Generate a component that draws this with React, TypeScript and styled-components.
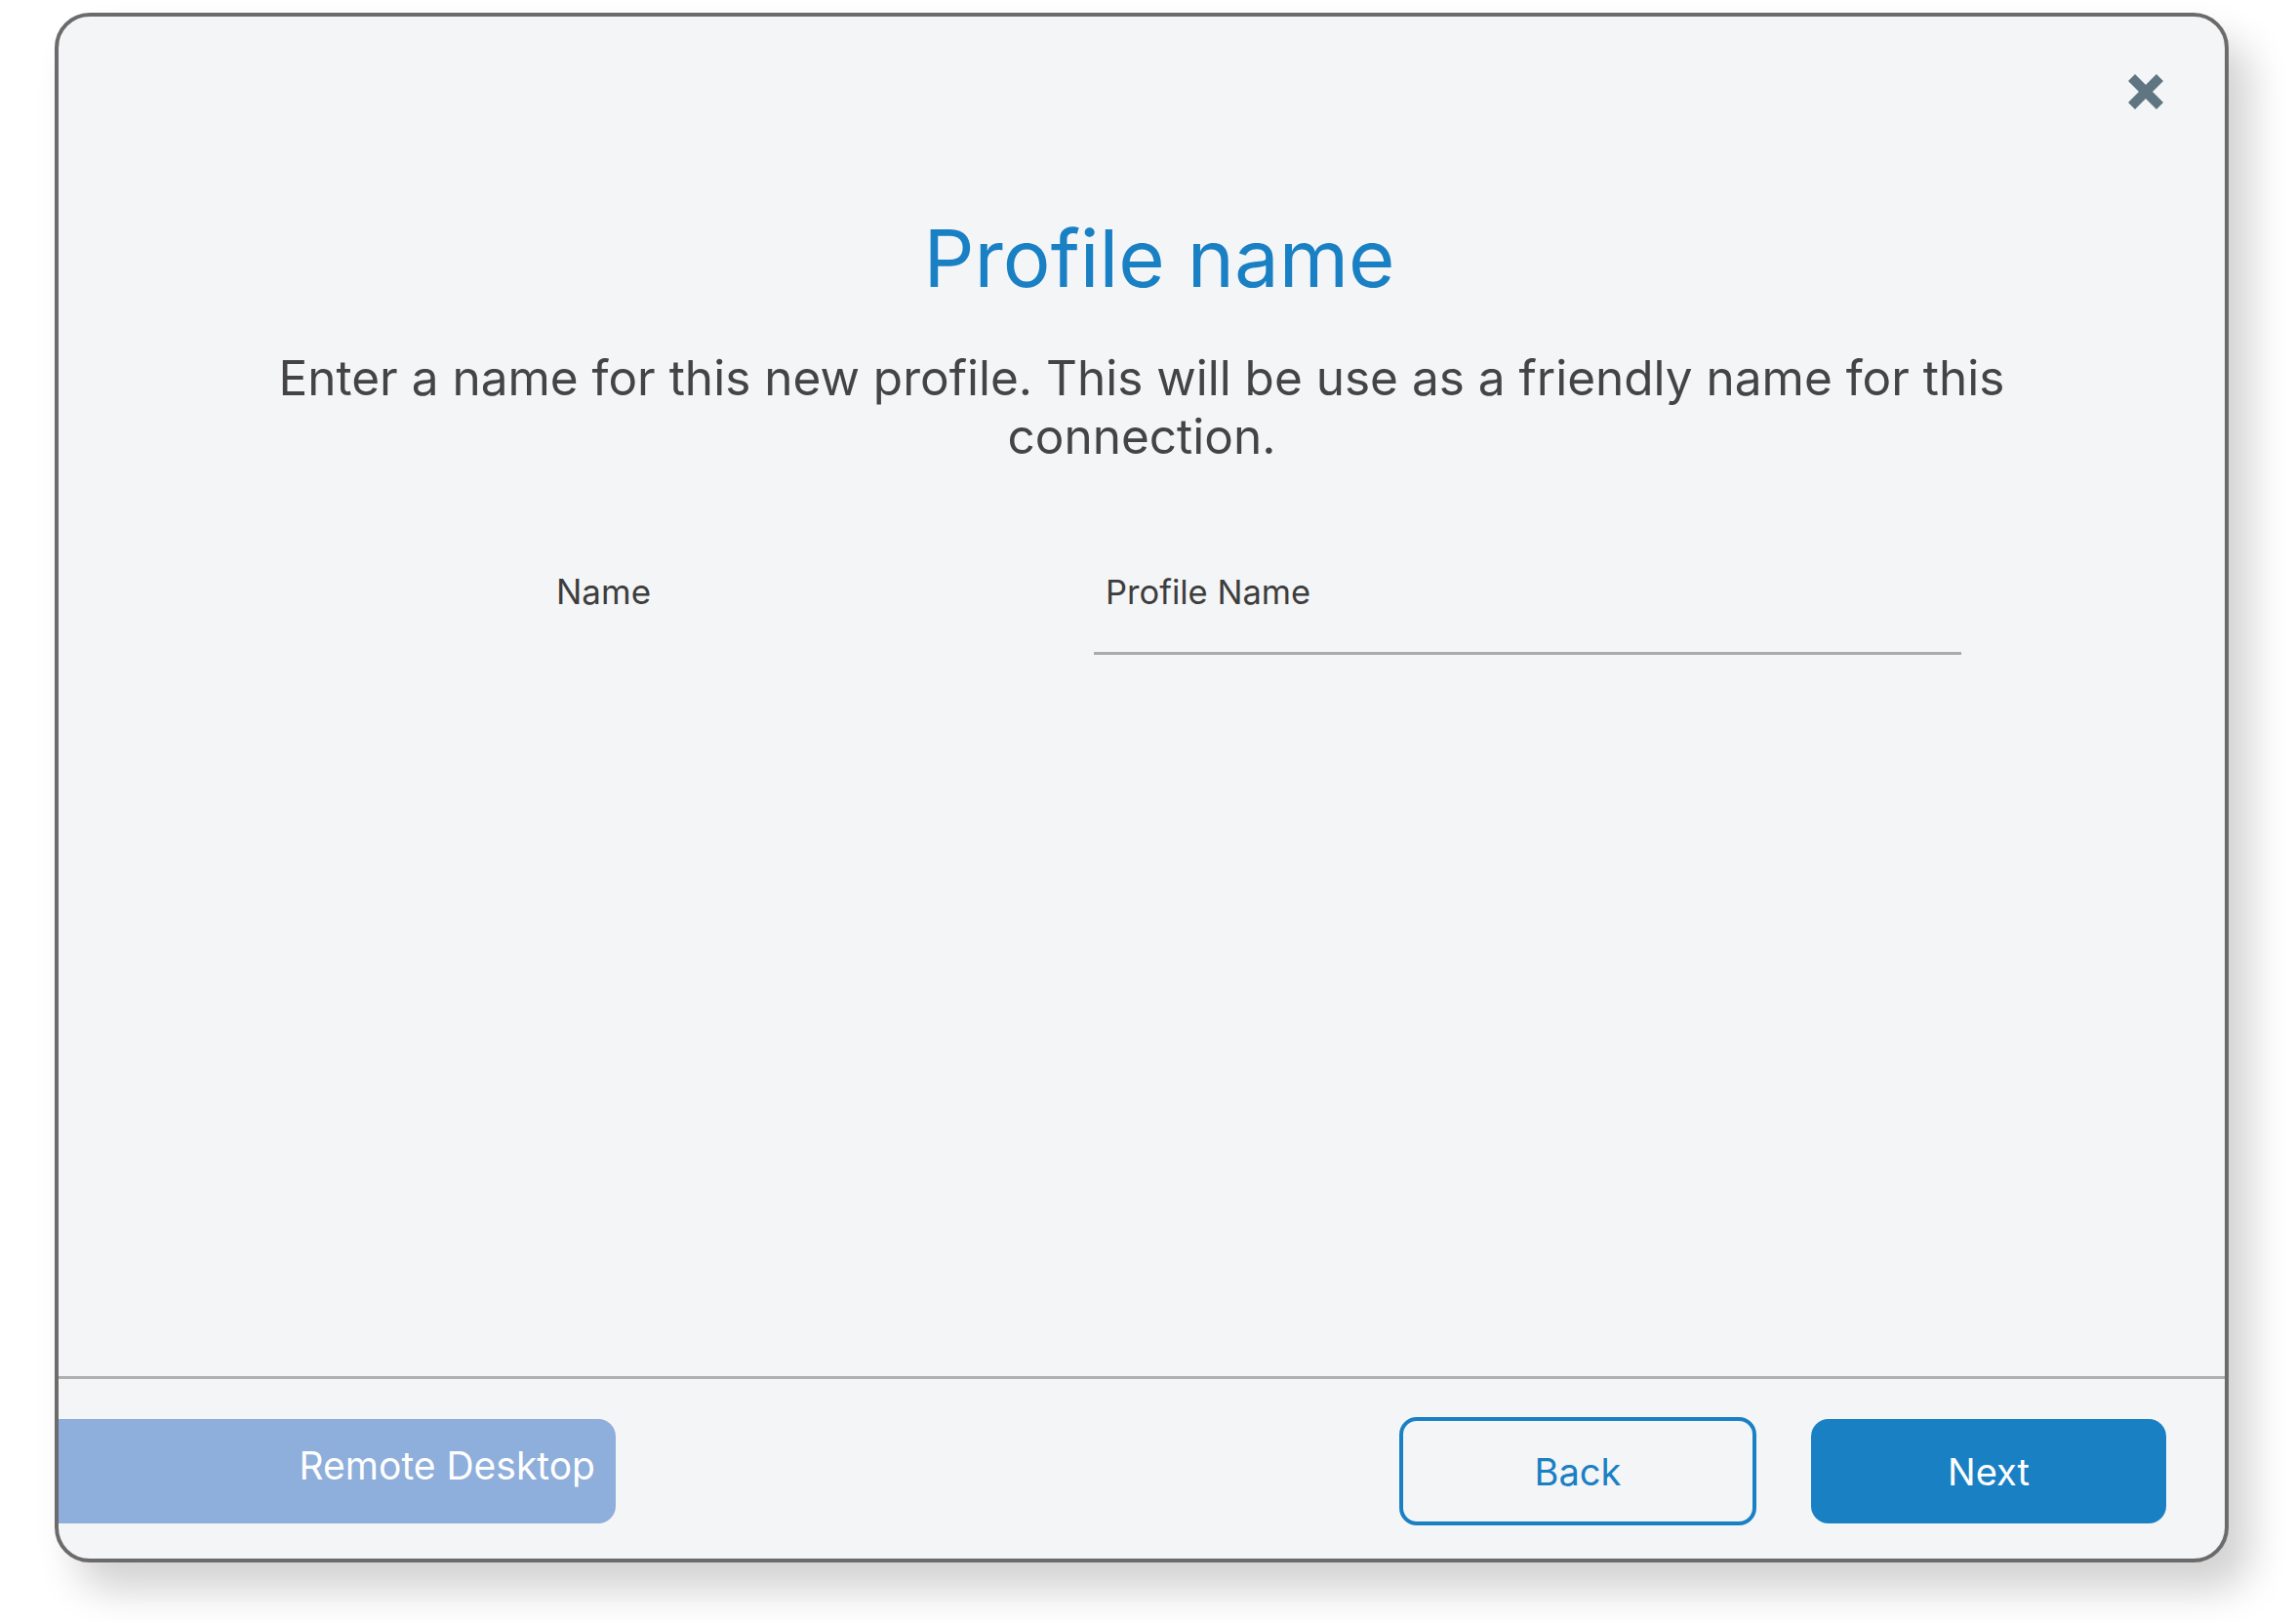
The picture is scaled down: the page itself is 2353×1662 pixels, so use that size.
import styled, { createGlobalStyle } from "styled-components";

const GlobalStyle = createGlobalStyle`
  html, body {
    margin: 0;
    padding: 0;
    background: #ffffff;
  }
  body {
    font-family: Inter, "Noto Sans", sans-serif;
  }
`;

// Page wrapper, places the dialog on the white page
const Page = styled.div`
  padding: 13px 0 0 56px;
  min-height: 1662px;
  box-sizing: border-box;
`;

// The dialog card
const Card = styled.div`
  position: relative;
  width: 2228px;
  height: 1588px;
  box-sizing: border-box;
  display: flex;
  flex-direction: column;
  background: #f4f5f7;
  border: 4px solid #6b6b6b;
  border-radius: 36px;
  box-shadow: 22px 28px 40px rgba(0, 0, 0, 0.18);
  overflow: hidden;
`;

const Main = styled.div`
  flex: 1;
  display: flex;
  flex-direction: column;
  align-items: center;
  padding-top: 197px;
`;

const CloseButton = styled.button`
  position: absolute;
  top: 59px;
  right: 63px;
  width: 36px;
  height: 36px;
  padding: 0;
  border: none;
  background: transparent;
  cursor: pointer;
  display: flex;
`;

const Title = styled.h1`
  margin: 0;
  padding-left: 36px;
  font-size: 81.5px;
  line-height: 102px;
  font-weight: 400;
  color: #1a80c4;
`;

const Description = styled.p`
  margin: 41px 0 0;
  max-width: 1850px;
  font-size: 49.5px;
  line-height: 60px;
  color: #444444;
  text-align: center;
`;

const FormRow = styled.div`
  align-self: flex-start;
  margin: 108px 0 0 510px;
  display: grid;
  grid-template-columns: 551px 889px;
  align-items: start;
`;

const Label = styled.label`
  font-size: 35px;
  line-height: 42px;
  color: #3d3d3d;
`;

const Input = styled.input`
  box-sizing: content-box;
  height: 42px;
  padding: 0 12px 41px;
  margin: 0;
  border: none;
  border-bottom: 3px solid #ababab;
  background: transparent;
  font-family: Inter, "Noto Sans", sans-serif;
  font-size: 34.5px;
  color: #3d3d3d;
  outline: none;

  &::placeholder {
    color: #3d3d3d;
    opacity: 1;
  }
`;

const Footer = styled.div`
  height: 179px;
  border-top: 3px solid #b0b0b0;
  display: flex;
  align-items: center;
  justify-content: space-between;
  padding: 5px 60px 0 0;
  box-sizing: content-box;
`;

const ProductTab = styled.div`
  width: 571px;
  height: 107px;
  box-sizing: border-box;
  display: flex;
  align-items: center;
  justify-content: flex-end;
  padding: 0 21px 12px 0;
  background: #8eaedb;
  border-radius: 0 18px 18px 0;
  font-size: 39px;
  color: #ffffff;
`;

const Actions = styled.div`
  display: flex;
  align-items: center;
  gap: 56px;
`;

const Button = styled.button<{ $primary?: boolean }>`
  box-sizing: border-box;
  width: ${(p) => (p.$primary ? "364px" : "366px")};
  height: ${(p) => (p.$primary ? "107px" : "111px")};
  border-radius: 18px;
  border: ${(p) => (p.$primary ? "none" : "4px solid #1a80c4")};
  background: ${(p) => (p.$primary ? "#1a80c4" : "transparent")};
  color: ${(p) => (p.$primary ? "#ffffff" : "#1a80c4")};
  font-family: Inter, "Noto Sans", sans-serif;
  font-size: 38px;
  cursor: pointer;
`;

const CloseIcon = () => (
  <svg width="36" height="36" viewBox="0 0 36 36">
    <path d="M3.5 3.5 L32.5 32.5 M32.5 3.5 L3.5 32.5" stroke="#5f7682" strokeWidth="10" fill="none" />
  </svg>
);

const App = () => {
  return (
    <Page>
      <GlobalStyle />
      <Card>
        <Main>
          <CloseButton aria-label="Close">
            <CloseIcon />
          </CloseButton>
          <Title>Profile name</Title>
          <Description>
            Enter a name for this new profile. This will be use as a friendly name for this connection.
          </Description>
          <FormRow>
            <Label htmlFor="profile-name">Name</Label>
            <Input id="profile-name" placeholder="Profile Name" />
          </FormRow>
        </Main>
        <Footer>
          <ProductTab>Remote Desktop</ProductTab>
          <Actions>
            <Button>Back</Button>
            <Button $primary>Next</Button>
          </Actions>
        </Footer>
      </Card>
    </Page>
  );
};

export default App;
